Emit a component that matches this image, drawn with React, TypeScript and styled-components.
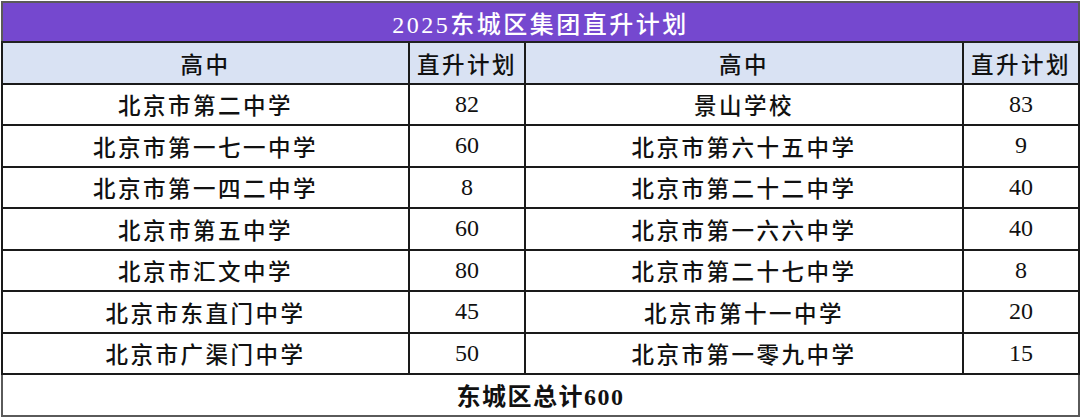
import React from "react";
import styled, { createGlobalStyle } from "styled-components";

const Global = createGlobalStyle`
  html, body { margin: 0; padding: 0; background: #ffffff; }
  body { font-family: "Liberation Serif", "Noto Sans CJK SC", serif; }
`;

const Page = styled.div`
  padding: 1px 0 0 1px;
  width: 1078px;
`;

const Table = styled.table`
  width: 1077px;
  border-collapse: collapse;
  table-layout: fixed;
  border: 2px solid #5a5a5a;
  color: #111;
`;

const TitleCell = styled.th`
  height: 38px;
  padding: 0;
  background: #7548cf;
  color: #ffffff;
  font-weight: 500;
  font-size: 24px;
  letter-spacing: 2.5px;
  text-align: center;
  border-bottom: 2px solid #222;
`;

const HeadCell = styled.th`
  height: 39.5px;
  padding: 0;
  background: #d9e2f3;
  font-weight: 500;
  font-size: 22.5px;
  letter-spacing: 2.5px;
  text-align: center;
  border: 2px solid #1a1a1a;
  border-top: none;
`;

const Cell = styled.td<{ $num?: boolean }>`
  height: 39.5px;
  padding: 0;
  text-align: center;
  font-weight: 500;
  font-size: ${(p) => (p.$num ? "24px" : "22.5px")};
  letter-spacing: ${(p) => (p.$num ? "0" : "2.5px")};
  border: 2px solid #1a1a1a;
  background: #fff;
`;

const FootCell = styled.td`
  height: 39.5px;
  padding: 0;
  text-align: center;
  font-size: 24px;
  font-weight: bold;
  letter-spacing: 1.5px;
  border-top: 2px solid #1a1a1a;
`;

const rows: [string, string, string, string][] = [
  ["北京市第二中学", "82", "景山学校", "83"],
  ["北京市第一七一中学", "60", "北京市第六十五中学", "9"],
  ["北京市第一四二中学", "8", "北京市第二十二中学", "40"],
  ["北京市第五中学", "60", "北京市第一六六中学", "40"],
  ["北京市汇文中学", "80", "北京市第二十七中学", "8"],
  ["北京市东直门中学", "45", "北京市第十一中学", "20"],
  ["北京市广渠门中学", "50", "北京市第一零九中学", "15"],
];

export default function App() {
  return (
    <Page>
      <Global />
      <Table>
        <colgroup>
          <col style={{ width: 407 }} />
          <col style={{ width: 116 }} />
          <col style={{ width: 438 }} />
          <col style={{ width: 116 }} />
        </colgroup>
        <thead>
          <tr>
            <TitleCell colSpan={4}>2025东城区集团直升计划</TitleCell>
          </tr>
          <tr>
            <HeadCell>高中</HeadCell>
            <HeadCell>直升计划</HeadCell>
            <HeadCell>高中</HeadCell>
            <HeadCell>直升计划</HeadCell>
          </tr>
        </thead>
        <tbody>
          {rows.map((r, i) => (
            <tr key={i}>
              <Cell>{r[0]}</Cell>
              <Cell $num>{r[1]}</Cell>
              <Cell>{r[2]}</Cell>
              <Cell $num>{r[3]}</Cell>
            </tr>
          ))}
          <tr>
            <FootCell colSpan={4}>东城区总计600</FootCell>
          </tr>
        </tbody>
      </Table>
    </Page>
  );
}
